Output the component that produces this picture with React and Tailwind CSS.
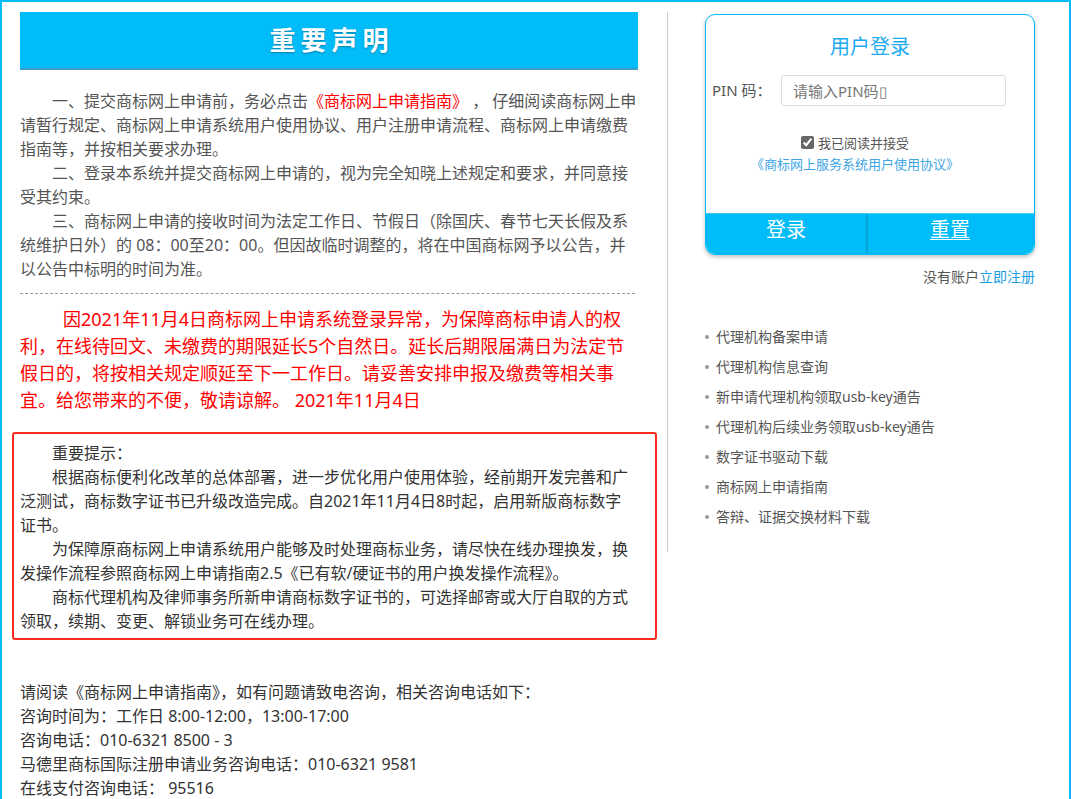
import { useState } from 'react'

const links = [
  '代理机构备案申请',
  '代理机构信息查询',
  '新申请代理机构领取usb-key通告',
  '代理机构后续业务领取usb-key通告',
  '数字证书驱动下载',
  '商标网上申请指南',
  '答辩、证据交换材料下载',
]

function LoginBox() {
  const [agree, setAgree] = useState(true)
  return (
    <div className="w-[330px]">
      <div className="mt-[2px] flex h-[241px] flex-col overflow-hidden rounded-[10px] border border-[#00bcf8] bg-white shadow-[0_2px_4px_rgba(0,0,0,0.25)]">
        <h2 className="pt-[20px] text-center text-[20px] leading-[24px] text-[#1eaaf0]">用户登录</h2>
        <div className="mt-[16px] flex items-center pl-[6px]">
          <label className="w-[69px] text-[15px] text-[#555]">PIN 码：</label>
          <input
            type="password"
            placeholder="请输入PIN码▯"
            className="h-[31px] w-[225px] rounded-[3px] border border-[#dcdcdc] px-[11px] text-[15px] text-[#555] outline-none placeholder:text-[#777]"
          />
        </div>
        <div className="mt-[25px] pr-[30px] text-center">
          <label className="inline-flex items-center gap-[4px] text-[13px] leading-[20px] text-[#555]">
            <input
              type="checkbox"
              checked={agree}
              onChange={(e) => setAgree(e.target.checked)}
              className="h-[13px] w-[13px] accent-[#666]"
            />
            我已阅读并接受
          </label>
          <a href="#" className="block text-[13px] leading-[18px] text-[#3ea5e5]">
            《商标网上服务系统用户使用协议》
          </a>
        </div>
        <div className="mt-auto flex h-[41px] border-t border-[#3fd3ff] bg-[#00bcf8] text-[20px] leading-[26px] text-white">
          <button className="w-[160px] pb-[8px] shadow-[1px_0_2px_rgba(0,0,0,0.25)]">登录</button>
          <button className="flex-1 pb-[8px]">
            <span className="underline decoration-1 underline-offset-[2px]">重置</span>
          </button>
        </div>
      </div>
      <p className="mt-[12px] text-right text-[14px] leading-[20px] text-[#555]">
        没有账户<a href="#" className="text-[#1a9de0]">立即注册</a>
      </p>
      <ul className="mt-[35px]">
        {links.map((label) => (
          <li key={label} className="flex items-center gap-[7px] text-[14px] leading-[30px] text-[#555]">
            <span className="h-[4px] w-[4px] rounded-full bg-[#999]" />
            <a href="#">{label}</a>
          </li>
        ))}
      </ul>
    </div>
  )
}

export default function App() {
  return (
    <div className="min-h-[820px] border-x-2 border-t-2 border-[#00bcf8] bg-white font-['Noto_Sans','Noto_Sans_CJK_SC',sans-serif]">
      <div className="flex items-start pl-[18px] pt-[10px]">
        {/* Notice column */}
        <div className="w-[618px]">
          <div className="flex h-[58px] items-center justify-center border-b-2 border-[#3c9ccb] bg-[#00bcf8]">
            <h1 className="pl-[5px] text-[26px] font-bold tracking-[5px] text-white [text-shadow:0_1px_2px_rgba(0,0,0,0.3)]">
              重要声明
            </h1>
          </div>

          <div className="mt-[19px] text-[16px] leading-[24px] text-[#555]">
            <p className="indent-[2em]">
              一、提交商标网上申请前，务必点击<a href="#" className="text-[#ff0000]">《商标网上申请指南》</a> ， 仔细阅读商标网上申请暂行规定、商标网上申请系统用户使用协议、用户注册申请流程、商标网上申请缴费指南等，并按相关要求办理。
            </p>
            <p className="indent-[2em]">
              二、登录本系统并提交商标网上申请的，视为完全知晓上述规定和要求，并同意接受其约束。
            </p>
            <p className="indent-[2em]">
              三、商标网上申请的接收时间为法定工作日、节假日（除国庆、春节七天长假及系统维护日外）的 08：00至20：00。但因故临时调整的，将在中国商标网予以公告，并以公告中标明的时间为准。
            </p>
          </div>

          <div className="mt-[12px] w-[615px] border-t border-dashed border-[#999]" />

          <p className="mt-[12px] indent-[43px] text-[18px] leading-[27px] text-[#ff0000]">
            因2021年11月4日商标网上申请系统登录异常，为保障商标申请人的权<br />
            利，在线待回文、未缴费的期限延长5个自然日。延长后期限届满日为法定节<br />
            假日的，将按相关规定顺延至下一工作日。请妥善安排申报及缴费等相关事<br />
            宜。给您带来的不便，敬请谅解。 2021年11月4日
          </p>

          <div className="ml-[-8px] mt-[18px] w-[645px] rounded-[3px] border-2 border-[#ff2a1f] pb-[5px] pl-[6px] pr-[25px] pt-[7px] text-[16px] leading-[24px] text-[#333]">
            <p className="indent-[2em]">重要提示：</p>
            <p className="indent-[2em]">
              根据商标便利化改革的总体部署，进一步优化用户使用体验，经前期开发完善和广泛测试，商标数字证书已升级改造完成。自2021年11月4日8时起，启用新版商标数字证书。
            </p>
            <p className="indent-[2em]">
              为保障原商标网上申请系统用户能够及时处理商标业务，请尽快在线办理换发，换发操作流程参照商标网上申请指南2.5《已有软/硬证书的用户换发操作流程》。
            </p>
            <p className="indent-[2em]">
              商标代理机构及律师事务所新申请商标数字证书的，可选择邮寄或大厅自取的方式领取，续期、变更、解锁业务可在线办理。
            </p>
          </div>

          <div className="mt-[40px] text-[16px] leading-[24px] text-[#333]">
            <p>请阅读《商标网上申请指南》，如有问题请致电咨询，相关咨询电话如下：</p>
            <p>咨询时间为：工作日 8:00-12:00，13:00-17:00</p>
            <p>咨询电话：010-6321 8500 - 3</p>
            <p>马德里商标国际注册申请业务咨询电话：010-6321 9581</p>
            <p>在线支付咨询电话： 95516</p>
          </div>
        </div>

        {/* divider */}
        <div className="ml-[29px] h-[540px] w-px bg-[#cccccc]" />

        <div className="ml-[37px]">
          <LoginBox />
        </div>
      </div>
    </div>
  )
}
